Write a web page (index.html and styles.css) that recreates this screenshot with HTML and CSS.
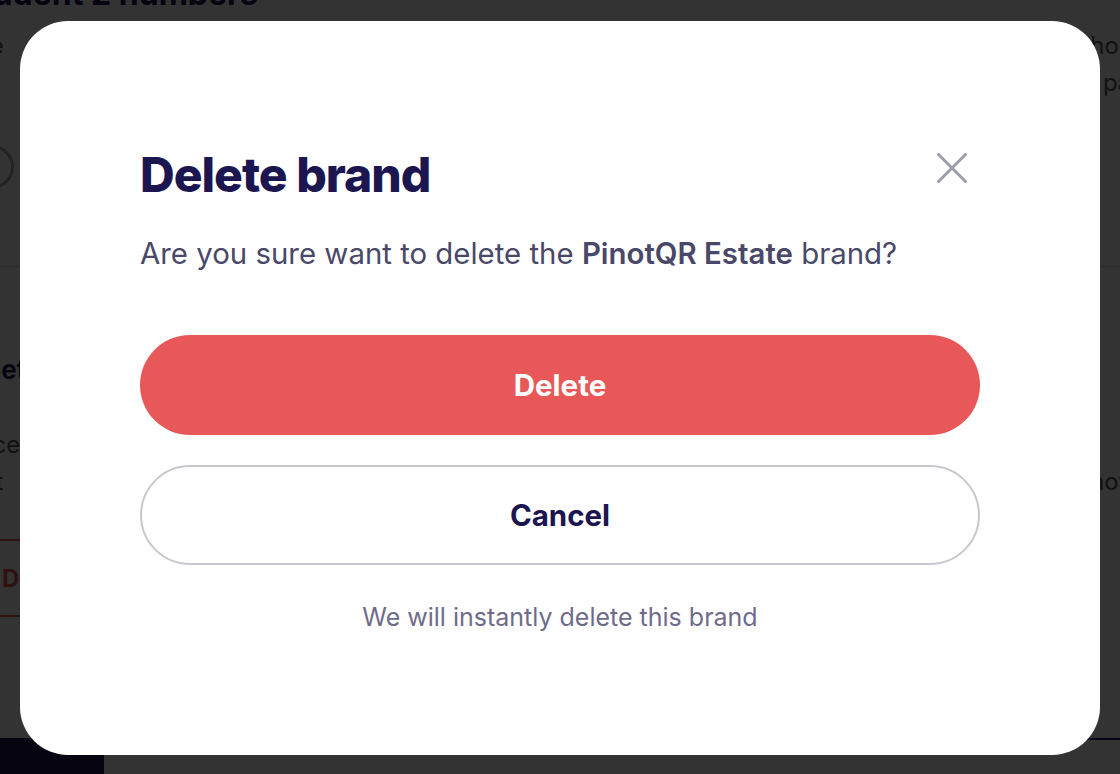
FILE: index.html
```html
<!DOCTYPE html>
<html lang="en">
<head>
<meta charset="utf-8">
<title>Delete brand</title>
<link rel="stylesheet" href="styles.css">
</head>
<body>
<div class="page">
  <main class="content">
    <h2 class="bg-title">Student 2 numbers</h2>
    <p class="bg-text bg-text1">The image will be shown to customers who choose</p>
    <p class="bg-text">the brand on the page</p>
    <div class="bg-toggle"></div>
    <hr class="bg-rule">
    <h3 class="bg-sub">Delete brand</h3>
    <p class="bg-text bg-text2">Once you delete a brand all products which are</p>
    <p class="bg-text">that brand will be removed</p>
    <div class="bg-danger">Delete brand</div>
  </main>
  <footer class="bg-footer"><div class="bg-footer-block"></div></footer>
</div>

<div class="overlay">
  <div class="modal" role="dialog" aria-labelledby="modal-title">
    <div class="modal-head">
      <h1 id="modal-title" class="modal-title">Delete brand</h1>
      <button class="close" aria-label="Close">
        <svg width="30" height="30" viewBox="0 0 30 30" aria-hidden="true">
          <path d="M1.5 1.5 L28.5 28.5 M28.5 1.5 L1.5 28.5" stroke="#9e9dab" stroke-width="3" stroke-linecap="round" fill="none"/>
        </svg>
      </button>
    </div>
    <p class="modal-text">Are you sure want to delete the <strong>PinotQR Estate</strong> brand?</p>
    <div class="actions">
      <button class="btn btn-danger">Delete</button>
      <button class="btn btn-outline">Cancel</button>
    </div>
    <p class="modal-note">We will instantly delete this brand</p>
  </div>
</div>
</body>
</html>
```
FILE: styles.css
```css
* { box-sizing: border-box; }

html, body {
  margin: 0;
  height: 100%;
}

body {
  font-family: Inter, "Noto Sans", "Liberation Sans", sans-serif;
  background: #ffffff;
  overflow: hidden;
}

/* ---------- background page ---------- */
.page {
  height: 774px;
  display: flex;
  flex-direction: column;
}

.content {
  flex: 1;
  margin-left: -40px;
  margin-right: -40px;
}

.bg-title {
  margin: -26px 0 0 0;
  font-size: 32px;
  line-height: 40px;
  font-weight: 700;
  color: #1b1650;
}

.bg-text {
  margin: 0;
  font-size: 24px;
  line-height: 37px;
  color: #555;
  white-space: nowrap;
  text-align: justify;
  text-align-last: justify;
}

.bg-text1 { margin-top: 13px; }

.bg-toggle {
  margin: 44px 0 0 10px;
  width: 44px;
  height: 44px;
  border: 3px solid #aaa;
  border-radius: 50%;
}

.bg-rule {
  margin: 77px 0 0 0;
  border: 0;
  border-top: 1px solid #ddd;
}

.bg-sub {
  margin: 85px 0 0 0;
  font-size: 26px;
  line-height: 36px;
  font-weight: 700;
  color: #1b1650;
}

.bg-text2 { margin-top: 38px; }

.bg-danger {
  margin: 39px 0 0 -30px;
  width: 300px;
  height: 78px;
  border: 2px solid #e95858;
  border-radius: 39px;
  display: flex;
  align-items: center;
  padding-left: 70px;
  color: #e95858;
  font-weight: 700;
  font-size: 24px;
}

.bg-footer {
  height: 36px;
  border-top: 2px solid #1b1650;
  display: flex;
}

.bg-footer-block {
  width: 104px;
  background: #1b1650;
}

/* ---------- overlay + modal ---------- */
.overlay {
  position: fixed;
  inset: 0;
  background: rgba(0, 0, 0, 0.8);
  display: flex;
  padding: 21px 20px 19px 20px;
}

.modal {
  flex: 1;
  background: #ffffff;
  border-radius: 48px;
  padding: 125px 120px 0 120px;
  display: flex;
  flex-direction: column;
}

.modal-head {
  display: flex;
  align-items: center;
  justify-content: space-between;
}

.modal-title {
  margin: 0;
  font-size: 48px;
  line-height: 58px;
  font-weight: 800;
  letter-spacing: -1px;
  color: #1b1650;
}

.close {
  border: 0;
  background: none;
  padding: 0;
  margin: -14px 13px 0 0;
  width: 30px;
  height: 30px;
  display: flex;
  cursor: pointer;
}

.modal-text {
  margin: 32px 0 0 0;
  font-size: 29.4px;
  line-height: 36px;
  color: #4a4868;
}

.modal-text strong {
  font-weight: 600;
  color: #4a4868;
}

.actions {
  margin-top: 63px;
  display: flex;
  flex-direction: column;
  gap: 30px;
}

.btn {
  height: 100px;
  border-radius: 50px;
  font-family: inherit;
  font-size: 29.5px;
  font-weight: 700;
  cursor: pointer;
}

.btn-danger {
  background: #e95858;
  color: #ffffff;
  border: 0;
}

.btn-outline {
  background: #ffffff;
  color: #1b1650;
  border: 2px solid #c8c7cf;
}

.modal-note {
  margin: 37px 0 0 0;
  text-align: center;
  font-size: 25px;
  line-height: 30px;
  color: #6e6c8a;
}
```
